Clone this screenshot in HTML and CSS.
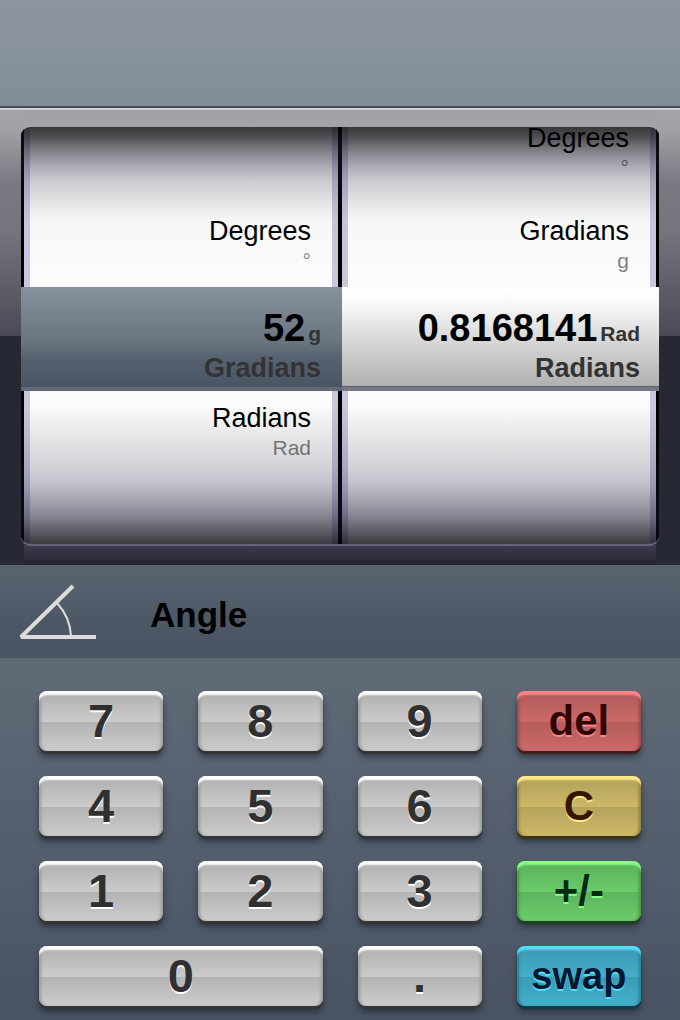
FILE: index.html
```html
<!DOCTYPE html>
<html lang="en">
<head>
<meta charset="utf-8">
<meta name="viewport" content="width=device-width, initial-scale=1">
<title>Angle converter</title>
<link rel="stylesheet" href="styles.css">
</head>
<body>
<main class="app">
  <header class="topbar"></header>
  <section class="picker" aria-label="Units">
    <div class="wheels">
      <div class="wheel wheel-from">
        <div class="drum drum-above">
          <button class="unit" type="button"><span class="unit-name">Degrees</span><span class="unit-sign">°</span></button>
        </div>
        <div class="selected">
          <div class="reading"><output class="value">52</output><span class="suffix">g</span></div>
          <div class="selected-name">Gradians</div>
        </div>
        <div class="drum drum-below">
          <button class="unit" type="button"><span class="unit-name">Radians</span><span class="unit-sign">Rad</span></button>
        </div>
      </div>
      <div class="wheel wheel-to">
        <div class="drum drum-above">
          <button class="unit" type="button"><span class="unit-name">Degrees</span><span class="unit-sign">°</span></button>
          <button class="unit" type="button"><span class="unit-name">Gradians</span><span class="unit-sign">g</span></button>
        </div>
        <div class="selected">
          <div class="reading"><output class="value">0.8168141</output><span class="suffix">Rad</span></div>
          <div class="selected-name">Radians</div>
        </div>
        <div class="drum drum-below"></div>
      </div>
    </div>
  </section>
  <section class="category">
    <svg class="angle-icon" viewBox="0 0 78 58" width="78" height="58" fill="none" stroke="#dcdcda" aria-hidden="true">
      <path d="M54 3 L2 54 H77" stroke-width="4" stroke-linejoin="bevel"/>
      <path d="M38 20 Q51 34 52 53" stroke-width="2"/>
    </svg>
    <h1 class="category-name">Angle</h1>
  </section>
  <section class="keypad" aria-label="Keypad">
    <button class="key" type="button">7</button>
    <button class="key" type="button">8</button>
    <button class="key" type="button">9</button>
    <button class="key key-del" type="button">del</button>
    <button class="key" type="button">4</button>
    <button class="key" type="button">5</button>
    <button class="key" type="button">6</button>
    <button class="key key-clear" type="button">C</button>
    <button class="key" type="button">1</button>
    <button class="key" type="button">2</button>
    <button class="key" type="button">3</button>
    <button class="key key-sign" type="button">+/-</button>
    <button class="key key-wide" type="button">0</button>
    <button class="key" type="button">.</button>
    <button class="key key-swap" type="button">swap</button>
  </section>
</main>
</body>
</html>
```
FILE: styles.css
```css
* { box-sizing: border-box; }

body {
  margin: 0;
  font-family: "Liberation Sans", Arial, sans-serif;
  color: #000;
  background: #4a5362;
}

.app {
  display: flex;
  flex-direction: column;
  min-height: 100vh;
}

button {
  font: inherit;
  color: inherit;
  border: 0;
  padding: 0;
  background: none;
  cursor: pointer;
}

.topbar {
  height: 108px;
  background: linear-gradient(#8e95a2, #828d99);
  border-bottom: 2px solid #444e5b;
}

/* Unit wheels */
.picker {
  padding: 17px 21px 21px;
  border-top: 2px solid #cfcfd3;
  background:
    linear-gradient(#3d3b50, #24242f) bottom / calc(100% - 48px) 20px no-repeat,
    linear-gradient(#a0a0a5, #a4a4a9) top / calc(100% - 48px) 17px no-repeat,
    linear-gradient(#a4a4a9 0, #a0a0a5 20px, #7b7a83 72px, #76757e 120px, #4b4955 226px, #262833 226px, #262835 100%);
}

.wheels {
  display: grid;
  grid-template-columns: 321fr 317fr;
  border-radius: 9px;
  overflow: hidden;
  box-shadow: 0 2px 0 #666473;
}

.wheel {
  display: grid;
  grid-template-rows: 160px 100px 157px;
  --rim: #cacae2;
}

.drum {
  display: flex;
  flex-direction: column;
  gap: 33px;
  overflow: hidden;
}

.wheel-from .drum {
  --face: linear-gradient(90deg, #000 0 3px, var(--rim) 3px 9px, #fff 9px calc(100% - 10px), var(--rim) calc(100% - 10px) calc(100% - 4px), #000 calc(100% - 4px));
  --rims: linear-gradient(90deg, #000 0 9px, transparent 9px calc(100% - 10px), #000 calc(100% - 10px));
  padding-right: 31px;
}

.wheel-to .drum {
  --face: linear-gradient(90deg, var(--rim) 0 6px, #fff 6px calc(100% - 9px), var(--rim) calc(100% - 9px) calc(100% - 3px), #000 calc(100% - 3px));
  padding-right: 30px;
}

.drum-above {
  justify-content: flex-end;
  padding-bottom: 12px;
  background:
    linear-gradient(rgba(0, 0, 0, .78) 0, rgba(14, 13, 20, .73) 10px, rgba(26, 25, 38, .54) 25px, rgba(34, 34, 60, .38) 39px, rgba(36, 37, 58, .23) 55px, rgba(40, 42, 50, .12) 76px, rgba(40, 42, 44, .04) 94px, rgba(0, 0, 0, .01) 100%),
    var(--face);
}

.drum-below {
  padding-top: 15px;
  background:
    linear-gradient(rgba(0, 0, 0, .01) 0, rgba(0, 0, 0, .02) 16px, rgba(40, 42, 54, .11) 44px, rgba(34, 34, 60, .2) 75px, rgba(30, 30, 64, .28) 93px, rgba(24, 24, 52, .4) 110px, rgba(20, 22, 42, .53) 126px, rgba(14, 12, 24, .68) 141px, rgba(4, 2, 10, .82) 157px),
    var(--face);
}

.wheel-from .drum-below { border-top: 4px solid #606977; padding-top: 11px; }
.wheel-to .drum-below { border-top: 4px solid #747983; }

.unit {
  flex: none;
  display: flex;
  flex-direction: column;
  text-align: right;
}

.unit-name {
  font-size: 27px;
  line-height: 32px;
  width: 100%;
}

.unit-sign {
  font-size: 21px;
  line-height: 28px;
  width: 100%;
  color: rgba(0, 0, 0, .5);
}

.selected {
  padding: 17px 21px 3px 8px;
  text-align: right;
  font-weight: bold;
  color: #333;
}

.wheel-from .selected { background: linear-gradient(#87919d, #6a7581 55%, #56616f 72%, #4a5563); }
.wheel-to .selected {
  background: linear-gradient(#fff 0, #fafafa 15%, #d2d2d2 60%, #b0b0b0 100%);
  padding-right: 19px;
  border-bottom: 1px solid #59636f;
}

.reading {
  display: flex;
  justify-content: flex-end;
  align-items: baseline;
  gap: 3px;
}

.value { font-size: 38px; line-height: 48px; color: #000; }
.suffix { font-size: 21px; line-height: 24px; }

.selected-name {
  font-size: 27px;
  line-height: 32px;
}

/* Category row */
.category {
  display: flex;
  align-items: center;
  gap: 53px;
  padding: 18px 19px 17px;
  background: linear-gradient(#5a6471, #4d5866 60%, #4a5463);
}

.angle-icon { flex: none; }

.category-name {
  margin: 0;
  padding-top: 6px;
  font-size: 35px;
  line-height: 48px;
}

/* Keypad */
.keypad {
  flex: 1;
  display: grid;
  grid-template-columns: repeat(4, 1fr);
  grid-auto-rows: 60px;
  gap: 25px 35px;
  padding: 33px 39px 12px;
  background: linear-gradient(#606b77, #555f6e 45%, #495362);
}

.key {
  --light: #ccc;
  --dark: #b3b3b3;
  --shine: #fff;
  --side: #999;
  --base: #353535;
  color: #303030;
  font-family: "Liberation Sans Narrow", "Arial Narrow", "Liberation Sans", sans-serif;
  font-size: 47px;
  font-weight: bold;
  line-height: 58px;
  border-radius: 8px;
  background: linear-gradient(var(--dark) 5px, var(--light) 31px, var(--dark) 31px, var(--light) 100%);
  box-shadow:
    inset 0 5px 2px -1px var(--shine),
    inset 4px 0 3px -2px var(--side),
    inset -4px 0 3px -2px var(--side),
    0 3px 1px var(--base),
    0 6px 6px rgba(20, 28, 38, .55);
  text-shadow: 0 2px 0 var(--shine);
}

.key-wide { grid-column: span 2; }

.key-del { --light: #cc6969; --dark: #b55c5c; --shine: #ff8585; --side: #974646; --base: #401c20; color: #300400; font-size: 42px; }
.key-clear { --light: #ccb968; --dark: #b5a35c; --shine: #ffe987; --side: #8c7c3c; --base: #3c3518; color: #361600; font-size: 42px; }
.key-sign { --light: #6bcc6b; --dark: #5db45d; --shine: #88ff88; --side: #459645; --base: #1b421f; color: #002b10; font-size: 42px; }
.key-swap { --light: #44afcb; --dark: #3b9bb5; --shine: #55dcff; --side: #287c94; --base: #123945; color: #001732; font-size: 38px; }
```
